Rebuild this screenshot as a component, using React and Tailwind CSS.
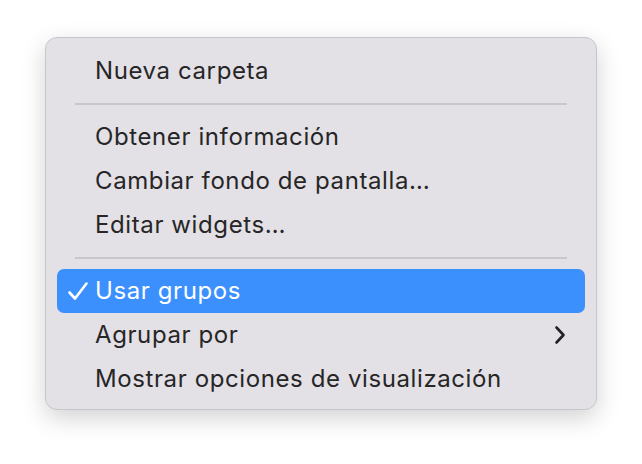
import React from "react";

const Item = ({ children, active, chevron }) => (
  <div
    className={`mx-[11px] h-[44px] flex items-center rounded-[7px] pl-[38px] pr-[20px] ${
      active ? "bg-[#3b90fe] text-white" : "text-[#262626]"
    }`}
  >
    <div className="relative flex-1 flex items-center">
      {active && (
        <svg width="22" height="20" viewBox="0 0 22 20" className="absolute left-[-28px] top-1/2 -translate-y-1/2">
          <path d="M2.5 11.5 L8 17.5 L19.5 2.5" fill="none" stroke="white" strokeWidth="2.6" strokeLinecap="round" strokeLinejoin="round" />
        </svg>
      )}
      <span>{children}</span>
    </div>
    {chevron && (
      <svg width="12" height="20" viewBox="0 0 12 20" className="mr-[-1px]">
        <path d="M2.5 2.5 L9.5 10 L2.5 17.5" fill="none" stroke="#222" strokeWidth="2.6" strokeLinecap="round" strokeLinejoin="round" />
      </svg>
    )}
  </div>
);

const Sep = () => (
  <div className="h-[22px] flex items-center px-[29px]">
    <div className="h-[2px] w-full bg-[#c9c6cc]" />
  </div>
);

export default function App() {
  return (
    <div className="w-[642px] h-[464px] bg-white pt-[37px] pl-[45px]" style={{ fontFamily: "Inter, 'Liberation Sans', sans-serif" }}>
      <div className="w-[552px] h-[373px] rounded-[12px] bg-[#e3e0e6] border border-[#c9c6cb] shadow-[0_8px_24px_rgba(0,0,0,0.18)] pt-[11px] text-[24px] tracking-[0.6px]">
        <Item>Nueva carpeta</Item>
        <Sep />
        <Item>Obtener información</Item>
        <Item>Cambiar fondo de pantalla…</Item>
        <Item>Editar widgets…</Item>
        <Sep />
        <Item active>Usar grupos</Item>
        <Item chevron>Agrupar por</Item>
        <Item>Mostrar opciones de visualización</Item>
      </div>
    </div>
  );
}
